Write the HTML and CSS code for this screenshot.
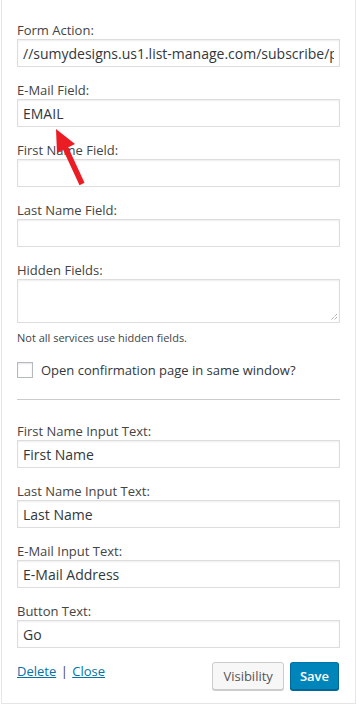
FILE: index.html
```html
<!DOCTYPE html>
<html>
<head>
<meta charset="utf-8">
<link rel="stylesheet" href="styles.css">
</head>
<body>
<div class="widget">
  <div class="field">
    <label class="lbl">Form Action:</label>
    <input class="input" type="text" value="//sumydesigns.us1.list-manage.com/subscribe/post" readonly>
  </div>
  <div class="field">
    <label class="lbl">E-Mail Field:</label>
    <input class="input" type="text" value="EMAIL" readonly>
  </div>
  <div class="field">
    <label class="lbl">First Name Field:</label>
    <input class="input" type="text" value="" readonly>
  </div>
  <div class="field">
    <label class="lbl">Last Name Field:</label>
    <input class="input" type="text" value="" readonly>
  </div>
  <div class="field hidden">
    <label class="lbl">Hidden Fields:</label>
    <div class="textarea">
      <svg class="grip" width="8" height="8" viewBox="0 0 8 8"><path d="M7 1L1 7M7 4L4 7" stroke="#888" stroke-width="1" fill="none" stroke-dasharray="1 1"/></svg>
    </div>
    <div class="note">Not all services use hidden fields.</div>
  </div>
  <div class="check-row">
    <span class="checkbox"></span>
    <span class="check-label">Open confirmation page in same window?</span>
  </div>
  <div class="rule"></div>
  <div class="field">
    <label class="lbl">First Name Input Text:</label>
    <input class="input" type="text" value="First Name" readonly>
  </div>
  <div class="field">
    <label class="lbl">Last Name Input Text:</label>
    <input class="input" type="text" value="Last Name" readonly>
  </div>
  <div class="field">
    <label class="lbl">E-Mail Input Text:</label>
    <input class="input" type="text" value="E-Mail Address" readonly>
  </div>
  <div class="field">
    <label class="lbl">Button Text:</label>
    <input class="input" type="text" value="Go" readonly>
  </div>
  <div class="actions">
    <div class="links"><a href="#">Delete</a> <span class="sep">|</span> <a href="#">Close</a></div>
    <div class="buttons">
      <button class="btn">Visibility</button>
      <button class="btn primary">Save</button>
    </div>
  </div>
</div>
<svg class="arrow" width="359" height="200" viewBox="0 0 359 200">
  <line x1="82" y1="184" x2="64" y2="145" stroke="#ec1c24" stroke-width="5.5"/>
  <polygon points="56,129 75,144 57,153" fill="#ec1c24"/>
</svg>
</body>
</html>
```

FILE: styles.css
```css
html, body {
  margin: 0;
  padding: 0;
  background: #fff;
}
body {
  font-family: "Open Sans", "Liberation Sans", sans-serif;
  color: #444;
  position: relative;
}
.widget {
  margin-left: 1px;
  width: 323px;
  padding: 21px 15px 13px 15px;
  border: 1px solid #e5e5e5;
  border-top: none;
}
.field {
  margin-bottom: 14px;
}
.lbl {
  display: block;
  font-size: 13px;
  line-height: 18px;
  color: #444;
}
.input {
  display: block;
  box-sizing: border-box;
  width: 100%;
  height: 28px;
  margin: 0;
  border: 1px solid #ddd;
  border-radius: 0;
  outline: none;
  box-shadow: inset 0 1px 2px rgba(0,0,0,0.07);
  padding: 0 5px;
  font-family: "Open Sans", "Liberation Sans", sans-serif;
  font-size: 14px;
  line-height: 26px;
  color: #32373c;
  background: #fff;
}
.textarea {
  box-sizing: border-box;
  height: 44px;
  border: 1px solid #ddd;
  box-shadow: inset 0 1px 2px rgba(0,0,0,0.07);
  position: relative;
}
.grip {
  position: absolute;
  right: 1px;
  bottom: 1px;
}
.hidden {
  margin-bottom: 0;
}
.note {
  font-size: 11px;
  line-height: 16px;
  margin-top: 7px;
  color: #444;
}
.check-row {
  display: flex;
  align-items: center;
  margin-top: 15px;
  height: 18px;
}
.checkbox {
  box-sizing: border-box;
  width: 16px;
  height: 16px;
  border: 1px solid #b4b9be;
  box-shadow: inset 0 1px 2px rgba(0,0,0,0.1);
  margin-right: 8px;
}
.check-label {
  font-size: 13px;
  color: #32373c;
}
.rule {
  height: 1px;
  background: #ccc;
  margin: 20px 0 22px 0;
}
.actions {
  display: flex;
  justify-content: space-between;
  align-items: flex-start;
}
.links {
  font-size: 13px;
  line-height: 18px;
  color: #444;
}
.links a {
  color: #0073aa;
  text-decoration: underline;
}
.sep {
  margin: 0 1px;
}
.buttons {
  display: flex;
  gap: 6px;
  margin-right: 1px;
}
.btn {
  box-sizing: border-box;
  height: 28px;
  padding: 0 10px;
  font-family: "Open Sans", "Liberation Sans", sans-serif;
  font-size: 13px;
  line-height: 26px;
  border: 1px solid #ccc;
  border-radius: 3px;
  background: #f7f7f7;
  color: #555;
  box-shadow: 0 1px 0 #ccc;
}
.primary {
  background: #0085ba;
  border-color: #0073aa #006799 #006799;
  box-shadow: 0 1px 0 #006799;
  color: #fff;
  font-weight: 600;
  padding: 0 9px;
}
.arrow {
  position: absolute;
  left: 0;
  top: 0;
  pointer-events: none;
}
```
